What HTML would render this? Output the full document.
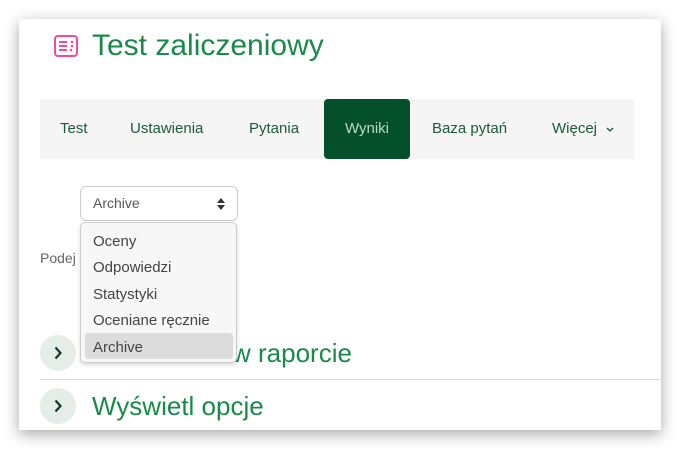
<!DOCTYPE html>
<html><head><meta charset="utf-8"><style>
body{margin:0;width:696px;height:465px;background:#fff;position:relative;overflow:hidden;font-family:"Liberation Sans",sans-serif}
.card{position:absolute;left:19px;top:19px;width:642px;height:411px;background:#fff;box-shadow:0 4px 14px rgba(0,0,0,.35);overflow:hidden}
.a{position:absolute}
.title{left:92px;top:29px;font-size:30px;color:#198a4a}
.nav{left:40px;top:99px;width:594px;height:60px;background:#f5f5f5}
.tab{position:absolute;top:0;height:60px;line-height:60px;font-size:15px;color:#1c5a3c}
.act{background:#03502a;color:#b9dcc6;border-radius:4px;text-align:center}
.sel{left:80px;top:186px;width:156px;height:33px;border:1px solid #ccc;border-radius:6px;font-size:14px;color:#555;line-height:33px;box-sizing:content-box}
.dd{left:80px;top:222px;width:155px;height:139px;border:1px solid #ccc;border-radius:5px;background:#f7f7f7;box-shadow:0 2px 4px rgba(0,0,0,.15)}
.it{position:absolute;left:12px;font-size:15px;color:#444}
.circ{width:36px;height:36px;border-radius:50%;background:#e4ede7;left:40px}
.h{font-size:26px;color:#198a4a}
</style></head><body>
<div class="card"></div>
<svg class="a" style="left:54px;top:35px" width="24" height="22" viewBox="0 0 24 22"><rect x="1" y="1" width="22" height="20" rx="3" fill="none" stroke="#f24aa0" stroke-width="2"/><path d="M5 7h8M5 11h8M5 15h8" stroke="#f24aa0" stroke-width="2"/><circle cx="18" cy="7" r="1.3" fill="#f24aa0"/><circle cx="18" cy="11" r="1.3" fill="#f24aa0"/><circle cx="17" cy="15" r="1.3" fill="#f24aa0"/></svg>
<div class="a title">Test zaliczeniowy</div>
<div class="a nav">
<div class="tab" style="left:20px">Test</div>
<div class="tab" style="left:90px">Ustawienia</div>
<div class="tab" style="left:209px">Pytania</div>
<div class="tab act" style="left:284px;width:86px">Wyniki</div>
<div class="tab" style="left:392px">Baza pytań</div>
<div class="tab" style="left:512px">Więcej</div>
<svg class="a" style="left:566px;top:28px" width="8" height="5" viewBox="0 0 8 5"><path d="M1 1L4 4L7 1" fill="none" stroke="#1c5a3c" stroke-width="1.3"/></svg>
</div>
<div class="a sel"><span style="margin-left:12px">Archive</span><svg class="a" style="left:136px;top:11px" width="8" height="12" viewBox="0 0 8 12"><path d="M0 5L4 0L8 5ZM0 7L4 12L8 7Z" fill="#333"/></svg></div>
<div class="a" style="left:40px;top:250px;font-size:14px;color:#666">Podej</div>
<div class="a circ" style="top:335px"></div>
<svg class="a" style="left:54px;top:346px" width="8" height="14" viewBox="0 0 8 14"><path d="M1.5 1.5L6.5 7L1.5 12.5" fill="none" stroke="#0d3b26" stroke-width="2.2"/></svg>
<div class="a h" style="left:232px;top:338px">w raporcie</div>
<div class="a" style="left:40px;top:379px;width:621px;height:1px;background:#ddd"></div>
<div class="a circ" style="top:388px"></div>
<svg class="a" style="left:54px;top:399px" width="8" height="14" viewBox="0 0 8 14"><path d="M1.5 1.5L6.5 7L1.5 12.5" fill="none" stroke="#0d3b26" stroke-width="2.2"/></svg>
<div class="a h" style="left:92px;top:391px">Wyświetl opcje</div>
<div class="a dd">
<div class="it" style="top:10px">Oceny</div>
<div class="it" style="top:36px">Odpowiedzi</div>
<div class="it" style="top:63px">Statystyki</div>
<div class="it" style="top:89px">Oceniane ręcznie</div>
<div class="a" style="left:4px;top:110px;width:148px;height:26px;background:#dcdcdc;border-radius:3px"></div>
<div class="it" style="top:116px">Archive</div>
</div>
</body></html>
